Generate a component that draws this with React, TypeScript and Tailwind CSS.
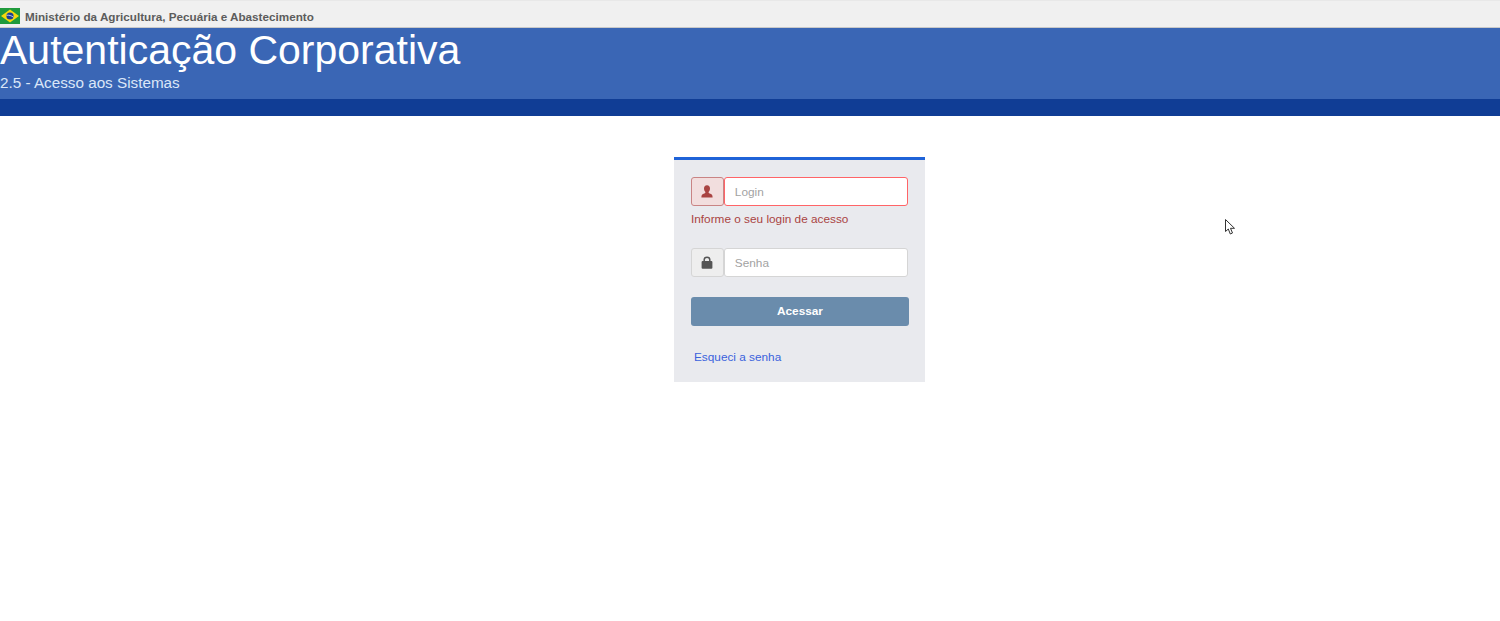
function Flag() {
  return (
    <svg width="20" height="16" viewBox="0 0 20 16" className="shrink-0">
      <rect width="20" height="16" fill="#1f9a3c" />
      <polygon points="10,1.5 19,8 10,14.5 1,8" fill="#f5d90a" />
      <circle cx="10" cy="8" r="3.6" fill="#1c3f94" />
      <path d="M6.6 7.3 C9 6.9 11.5 7.7 13.4 9.1" stroke="#fff" strokeWidth="0.7" fill="none" />
    </svg>
  );
}

function UserIcon() {
  return (
    <svg width="12" height="13" viewBox="0 0 12 13">
      <path
        d="M6 0.3 C3.9 0.3 3 1.8 3 3.6 C3 5 3.6 6.1 4.4 6.9 C4.5 7.9 3.9 8.2 2.6 8.7 C1 9.3 0.4 10 0.4 12.6 L11.6 12.6 C11.6 10 11 9.3 9.4 8.7 C8.1 8.2 7.5 7.9 7.6 6.9 C8.4 6.1 9 5 9 3.6 C9 1.8 8.1 0.3 6 0.3 Z"
        fill="#a94442"
      />
    </svg>
  );
}

function LockIcon() {
  return (
    <svg width="12" height="13" viewBox="0 0 12 13">
      <path d="M3.2 6 V3.8 C3.2 2.2 4.4 1.2 6 1.2 C7.6 1.2 8.8 2.2 8.8 3.8 V6" stroke="#555" strokeWidth="1.5" fill="none" />
      <rect x="0.6" y="5" width="10.8" height="7.8" rx="1" fill="#555" />
    </svg>
  );
}

function Cursor() {
  return (
    <svg width="12" height="17" viewBox="0 0 12 17" className="absolute left-[1225px] top-[219px]">
      <path
        d="M0.5 0.5 L0.5 12.5 L3.3 10 L5.3 15 L7.5 14 L5.5 9.3 L9.5 9.3 Z"
        fill="#fff"
        stroke="#333"
        strokeWidth="1"
      />
    </svg>
  );
}

export default function App() {
  return (
    <div className="relative min-h-[621px] bg-white font-['Liberation_Sans',Arial,sans-serif]">
      <div className="flex h-[28px] items-end gap-[5px] border-t border-b border-t-[#e8e8e8] border-b-[#c9c9c9] bg-[#f0f0f0] pb-[3px]">
        <Flag />
        <span className="text-[11.7px] leading-[15px] font-bold text-[#5c5c5c]">
          Ministério da Agricultura, Pecuária e Abastecimento
        </span>
      </div>

      <header className="h-[71px] bg-[#3a66b5] text-white">
        <h1 className="h-[46px] text-[41px] leading-[44px]">Autenticação Corporativa</h1>
        <p className="text-[15.25px] leading-[18px] text-[#dbe6f8]">2.5 - Acesso aos Sistemas</p>
      </header>
      <div className="h-[17px] bg-[#103d95]" />

      <main className="pt-[41px] pl-[674px]">
        <div className="h-[225px] w-[251px] border-t-[3px] border-[#1f63d8] bg-[#e9eaee] px-[17px] pt-[17px] text-[11.8px]">
          <div className="flex h-[29px]">
            <span className="flex w-[33px] items-center justify-center rounded-[3px] border border-[#c98484] bg-[#f2dede]">
              <UserIcon />
            </span>
            <div className="w-[185px] rounded-[3px] border border-red-400 bg-white">
              <input
                placeholder="Login"
                className="h-full w-full rounded-[2px] bg-transparent px-[10px] text-[11.8px] outline-none placeholder:text-[#a2a2a2]"
              />
            </div>
          </div>
          <p className="mt-[5px] h-[17px] leading-[17px] text-[#a94442]">Informe o seu login de acesso</p>

          <div className="mt-[20px] flex h-[29px]">
            <span className="flex w-[33px] items-center justify-center rounded-[3px] border border-[#d5d5d5] bg-[#eeeeee]">
              <LockIcon />
            </span>
            <div className="w-[185px] rounded-[3px] border border-[#d5d5d5] bg-white">
              <input
                placeholder="Senha"
                className="h-full w-full rounded-[2px] bg-transparent px-[10px] text-[11.8px] outline-none placeholder:text-[#a2a2a2]"
              />
            </div>
          </div>

          <button
            type="button"
            className="mt-[20px] h-[29px] w-[218px] rounded-[3px] bg-[#6a8cac] text-[11.8px] font-bold text-white"
          >
            Acessar
          </button>

          <a className="mt-[23px] ml-[3px] block leading-[17px] text-[#3a62dd]">Esqueci a senha</a>
        </div>
      </main>

      <Cursor />
    </div>
  );
}
